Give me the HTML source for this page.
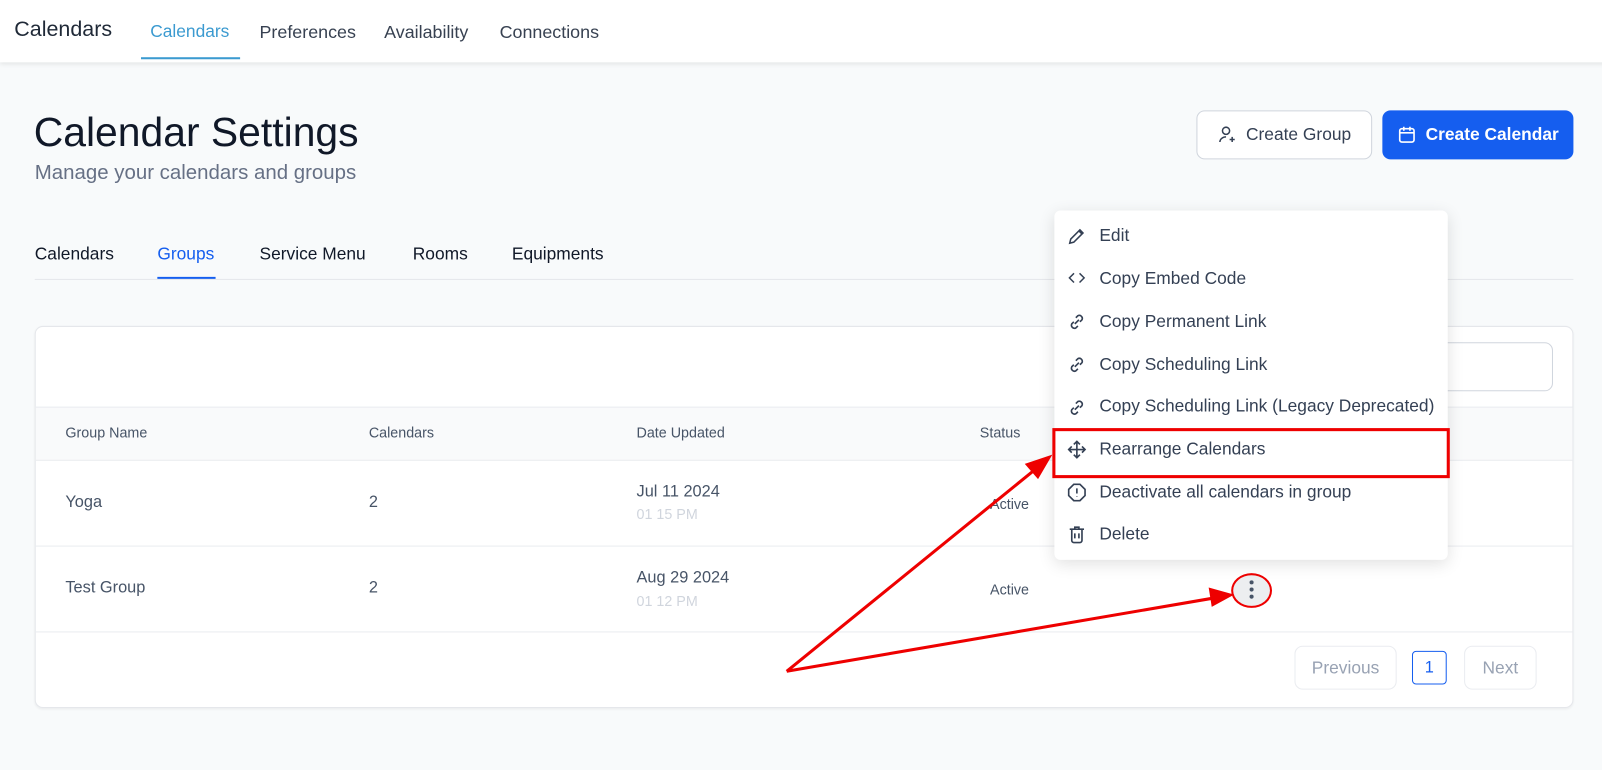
<!DOCTYPE html>
<html><head><meta charset="utf-8"><style>
*{box-sizing:border-box;margin:0;padding:0}
body{width:1602px;height:754px;overflow:hidden;background:#f8fafb;font-family:"Liberation Sans",sans-serif;color:#111827}
#w{position:absolute;left:0;top:0;width:1568px;height:738px;transform:scale(1.0217);transform-origin:0 0}
.hdr{position:absolute;left:0;top:0;width:1602px;height:61px;background:#fff;box-shadow:0 2px 4px rgba(0,0,0,.08)}
.a{position:absolute;white-space:nowrap}
.btn{position:absolute;border-radius:8px;display:flex;align-items:center;justify-content:center;font-size:17px}
.menu{position:absolute;left:1032px;top:206px;width:385px;height:342px;background:#fff;border-radius:6px;box-shadow:0 4px 16px rgba(0,0,0,.12)}
.mi{position:absolute;left:44px;font-size:17px;color:#344054}
.ic{position:absolute;left:12px}
</style></head><body><div id="w">
<div class="hdr">
<div class="a" style="left:14px;top:17px;font-size:21px;color:#1f2937">Calendars</div>
<div class="a" style="left:147px;top:21px;font-size:17px;color:#3b9ad0">Calendars</div>
<div style="position:absolute;left:138px;top:56px;width:97px;height:2px;background:#3b9ad0"></div>
<div class="a" style="left:254px;top:21px;font-size:17.5px;color:#374151">Preferences</div>
<div class="a" style="left:376px;top:21px;font-size:17.5px;color:#374151">Availability</div>
<div class="a" style="left:489px;top:21px;font-size:17.5px;color:#374151">Connections</div>
</div>
<div class="a" style="left:33px;top:108px;font-size:40px;color:#101828">Calendar Settings</div>
<div class="a" style="left:34px;top:158px;font-size:20px;color:#667085">Manage your calendars and groups</div>
<div class="btn" style="left:1171px;top:108px;width:172px;height:48px;background:#fff;border:1px solid #d0d5dd;color:#344054">
<svg width="20" height="20" viewBox="0 0 20 20" fill="none" stroke="#344054" stroke-width="1.5" style="margin-right:8px"><circle cx="8" cy="6" r="3.5"/><path d="M2 17c0-3 3-5 6-5M14 12v5M11.5 14.5h5"/></svg>Create Group</div>
<div class="btn" style="left:1353px;top:108px;width:187px;height:48px;background:#155eef;color:#fff;font-weight:bold">
<svg width="20" height="20" viewBox="0 0 20 20" fill="none" stroke="#fff" stroke-width="1.6" style="margin-right:8px"><rect x="3" y="4" width="14" height="13" rx="2"/><path d="M3 8h14M7 2v4M13 2v4"/></svg>Create Calendar</div>
<div class="a" style="left:34px;top:239px;font-size:17px;color:#101828">Calendars</div>
<div class="a" style="left:154px;top:239px;font-size:17px;color:#155eef">Groups</div>
<div style="position:absolute;left:154px;top:271px;width:57px;height:2px;background:#155eef"></div>
<div class="a" style="left:254px;top:239px;font-size:17px;color:#101828">Service Menu</div>
<div class="a" style="left:404px;top:239px;font-size:17px;color:#101828">Rooms</div>
<div class="a" style="left:501px;top:239px;font-size:17px;color:#101828">Equipments</div>
<div style="position:absolute;left:34px;top:273px;width:1506px;height:1px;background:#e5e7eb"></div>
<div style="position:absolute;left:34px;top:319px;width:1506px;height:374px;background:#fff;border:1px solid #e5e7eb;border-radius:8px;overflow:hidden;box-shadow:0 1px 2px rgba(0,0,0,.05)">
<div style="position:absolute;left:1000px;top:15px;width:485px;height:48px;border:1px solid #d0d5dd;border-radius:8px"></div>
<div style="position:absolute;left:0;top:78px;width:1506px;height:53px;background:#f9fafb;border-top:1px solid #eaecf0;border-bottom:1px solid #eaecf0"></div>
<div style="position:absolute;left:0;top:214px;width:1506px;height:1px;background:#eaecf0"></div>
<div style="position:absolute;left:0;top:298px;width:1506px;height:1px;background:#eaecf0"></div>
</div>
<div class="a" style="left:64px;top:415px;font-size:14px;color:#475467">Group Name</div>
<div class="a" style="left:361px;top:415px;font-size:14px;color:#475467">Calendars</div>
<div class="a" style="left:623px;top:415px;font-size:14px;color:#475467">Date Updated</div>
<div class="a" style="left:959px;top:415px;font-size:14px;color:#475467">Status</div>
<div class="a" style="left:64px;top:483px;font-size:16px;color:#475467">Yoga</div>
<div class="a" style="left:361px;top:483px;font-size:16px;color:#475467">2</div>
<div class="a" style="left:623px;top:473px;font-size:16px;color:#475467">Jul 11 2024</div>
<div class="a" style="left:623px;top:495px;font-size:14px;color:#d0d5dd">01 15 PM</div>
<div class="a" style="left:969px;top:485px;font-size:14px;color:#475467">Active</div>
<div class="a" style="left:64px;top:567px;font-size:16px;color:#475467">Test Group</div>
<div class="a" style="left:361px;top:567px;font-size:16px;color:#475467">2</div>
<div class="a" style="left:623px;top:557px;font-size:16px;color:#475467">Aug 29 2024</div>
<div class="a" style="left:623px;top:580px;font-size:14px;color:#d0d5dd">01 12 PM</div>
<div class="a" style="left:969px;top:569px;font-size:14px;color:#475467">Active</div>
<div style="position:absolute;left:1205px;top:561px;width:40px;height:34px;border-radius:50%;background:#eceef0;border:2px solid #e00"></div>
<svg style="position:absolute;left:1220px;top:565px" width="10" height="26"><circle cx="5" cy="5" r="2" fill="#475467"/><circle cx="5" cy="12" r="2" fill="#475467"/><circle cx="5" cy="19" r="2" fill="#475467"/></svg>
<div class="btn" style="left:1267px;top:632px;width:100px;height:43px;border:1px solid #eaecf0;color:#98a2b3;font-size:17px">Previous</div>
<div class="btn" style="left:1382px;top:637px;width:34px;height:33px;border:1px solid #155eef;border-radius:4px;color:#155eef;font-size:16px">1</div>
<div class="btn" style="left:1433px;top:632px;width:71px;height:43px;border:1px solid #eaecf0;color:#98a2b3;font-size:17px">Next</div>
<div class="menu">
<svg class="ic" style="top:15px" width="20" height="20" viewBox="0 0 20 20" fill="none" stroke="#344054" stroke-width="1.5"><path d="M3 17l1-4L13 4l3 3-9 9zM12 5l3 3"/></svg><div class="mi" style="top:15px">Edit</div>
<svg class="ic" style="top:57px" width="20" height="20" viewBox="0 0 20 20" fill="none" stroke="#344054" stroke-width="1.6"><path d="M7 5L2 10l5 5M13 5l5 5-5 5" transform="scale(.9) translate(1,0)"/></svg><div class="mi" style="top:57px">Copy Embed Code</div>
<svg class="ic" style="top:99px" width="20" height="20" viewBox="0 0 20 20" fill="none" stroke="#344054" stroke-width="1.6"><path d="M9 6l2-2a3 3 0 014 4l-2 2M11 14l-2 2a3 3 0 01-4-4l2-2M8 12l4-4"/></svg><div class="mi" style="top:99px">Copy Permanent Link</div>
<svg class="ic" style="top:141px" width="20" height="20" viewBox="0 0 20 20" fill="none" stroke="#344054" stroke-width="1.6"><path d="M9 6l2-2a3 3 0 014 4l-2 2M11 14l-2 2a3 3 0 01-4-4l2-2M8 12l4-4"/></svg><div class="mi" style="top:141px">Copy Scheduling Link</div>
<svg class="ic" style="top:183px" width="20" height="20" viewBox="0 0 20 20" fill="none" stroke="#344054" stroke-width="1.6"><path d="M9 6l2-2a3 3 0 014 4l-2 2M11 14l-2 2a3 3 0 01-4-4l2-2M8 12l4-4"/></svg><div class="mi" style="top:182px">Copy Scheduling Link (Legacy Deprecated)</div>
<svg class="ic" style="top:224px" width="20" height="20" viewBox="0 0 20 20" fill="none" stroke="#344054" stroke-width="1.6"><path d="M10 2v16M2 10h16M7 5l3-3 3 3M7 15l3 3 3-3M5 7l-3 3 3 3M15 7l3 3-3 3"/></svg><div class="mi" style="top:224px">Rearrange Calendars</div>
<svg class="ic" style="top:266px" width="20" height="20" viewBox="0 0 20 20" fill="none" stroke="#344054" stroke-width="1.6"><path d="M7 2h6l5 5v6l-5 5H7l-5-5V7z"/><path d="M10 6v5M10 13.5v.5"/></svg><div class="mi" style="top:266px">Deactivate all calendars in group</div>
<svg class="ic" style="top:307px" width="20" height="20" viewBox="0 0 20 20" fill="none" stroke="#344054" stroke-width="1.6"><path d="M3 5h14M8 5V3h4v2M5 5v11a2 2 0 002 2h6a2 2 0 002-2V5M8 9v5M12 9v5"/></svg><div class="mi" style="top:307px">Delete</div>
</div>
<div style="position:absolute;left:1030px;top:419px;width:389px;height:49px;border:3px solid #e00"></div>
<svg style="position:absolute;left:0;top:0" width="1602" height="754"><g stroke="#e00" stroke-width="3" fill="#e00"><line x1="770" y1="657" x2="1015" y2="458"/><line x1="770" y1="657" x2="1190" y2="585"/><polygon points="1030,445 1003,454 1016,469" stroke="none"/><polygon points="1208,582 1183,575 1186,594" stroke="none"/></g></svg>
</div></body></html>
